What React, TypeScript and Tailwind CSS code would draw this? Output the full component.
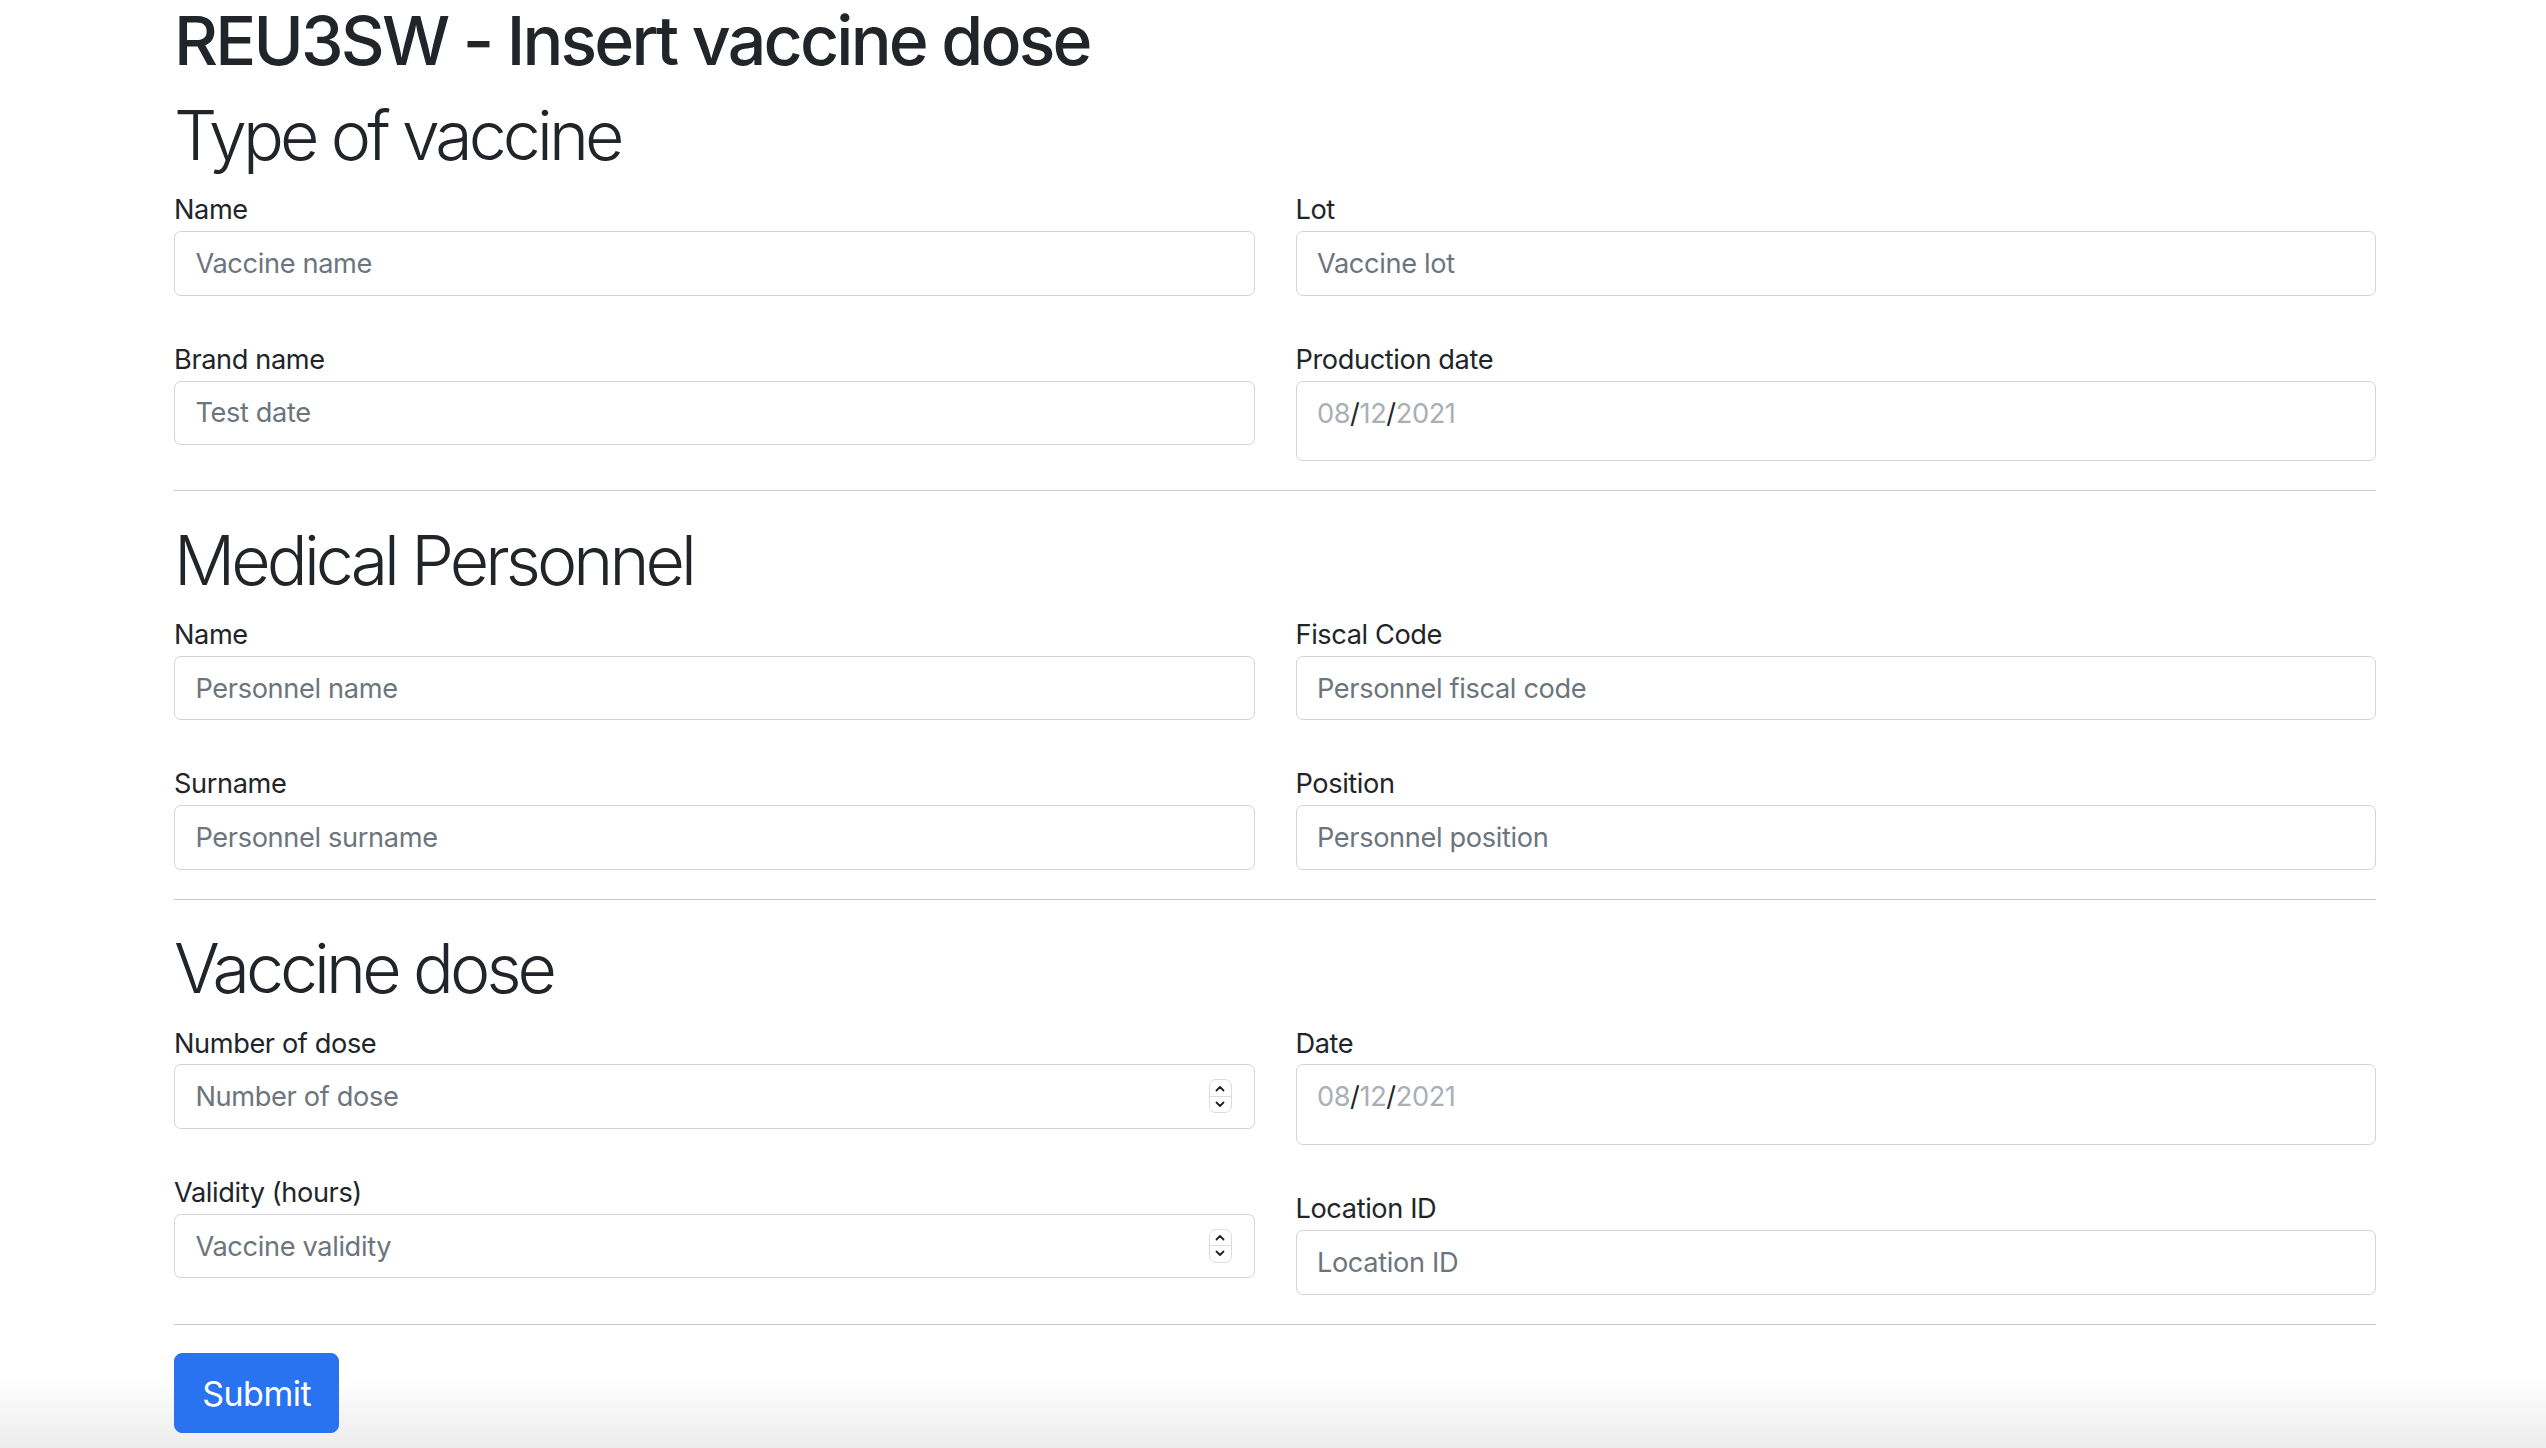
import React from 'react';

const font = { fontFamily: 'Inter, "Liberation Sans", sans-serif' };

function Field({ label, placeholder }: { label: string; placeholder: string }) {
  return (
    <div>
      <label className="block text-[27.2px] leading-[40.8px]">{label}</label>
      <input
        type="text"
        placeholder={placeholder}
        className="block w-full h-[64.6px] px-[20.4px] text-[27.2px] leading-[40.8px] tracking-[-0.35px] border-[1.7px] border-[#ced4da] rounded-[6.8px] bg-white outline-none placeholder:text-[#6c757d]"
      />
    </div>
  );
}

function NumberField({ label, placeholder }: { label: string; placeholder: string }) {
  return (
    <div>
      <label className="block text-[27.2px] leading-[40.8px]">{label}</label>
      <div className="relative">
        <input
          type="text"
          placeholder={placeholder}
          className="block w-full h-[64.6px] px-[20.4px] text-[27.2px] leading-[40.8px] tracking-[-0.35px] border-[1.7px] border-[#ced4da] rounded-[6.8px] bg-white outline-none placeholder:text-[#6c757d]"
        />
        <div className="absolute right-[23px] top-[15px] w-[23px] h-[34px] rounded-[7px] border border-[#dcdcdc] bg-white flex flex-col">
          <div className="flex-1 flex items-center justify-center border-b border-[#dcdcdc]">
            <svg width="10" height="7" viewBox="0 0 10 7" fill="none">
              <path d="M1.5 5.5L5 2l3.5 3.5" stroke="#222" strokeWidth="1.8" strokeLinecap="round" strokeLinejoin="round" />
            </svg>
          </div>
          <div className="flex-1 flex items-center justify-center">
            <svg width="10" height="7" viewBox="0 0 10 7" fill="none">
              <path d="M1.5 1.5L5 5l3.5-3.5" stroke="#222" strokeWidth="1.8" strokeLinecap="round" strokeLinejoin="round" />
            </svg>
          </div>
        </div>
      </div>
    </div>
  );
}

function DateField({ label }: { label: string }) {
  return (
    <div>
      <label className="block text-[27.2px] leading-[40.8px]">{label}</label>
      <div className="w-full h-[80.8px] px-[20.4px] pt-[12px] text-[27.2px] leading-[40.8px] border-[1.7px] border-[#ced4da] rounded-[6.8px] bg-white">
        <span className="text-[#a9afb5]">08</span>
        <span>/</span>
        <span className="text-[#a9afb5]">12</span>
        <span>/</span>
        <span className="text-[#a9afb5]">2021</span>
      </div>
    </div>
  );
}

function Divider() {
  return <hr className="mt-[29px] mb-[28.5px] border-0 border-t-[1.7px] border-[#c9cacb]" />;
}

function Heading({ children }: { children: React.ReactNode }) {
  return <h2 className="text-[68px] font-light leading-[81.6px] tracking-[-3.9px] mb-[13.6px]">{children}</h2>;
}

export default function App() {
  return (
    <div className="min-h-screen bg-linear-to-b from-white from-[95%] to-[#ececec] text-[#212529] tracking-[-0.4px]" style={font}>
      <div className="ml-[174px] w-[2202px]">
        <h1 className="text-[68px] font-medium leading-[81.6px] tracking-[-2.8px] mb-[13.6px]">REU3SW - Insert vaccine dose</h1>

        <Heading>Type of vaccine</Heading>
        <div className="grid grid-cols-2 gap-x-[41px] items-start">
          <div className="flex flex-col gap-[44px]">
            <Field label="Name" placeholder="Vaccine name" />
            <Field label="Brand name" placeholder="Test date" />
          </div>
          <div className="flex flex-col gap-[44px]">
            <Field label="Lot" placeholder="Vaccine lot" />
            <DateField label="Production date" />
          </div>
        </div>
        <Divider />

        <Heading>Medical Personnel</Heading>
        <div className="grid grid-cols-2 gap-x-[41px] items-start">
          <div className="flex flex-col gap-[44px]">
            <Field label="Name" placeholder="Personnel name" />
            <Field label="Surname" placeholder="Personnel surname" />
          </div>
          <div className="flex flex-col gap-[44px]">
            <Field label="Fiscal Code" placeholder="Personnel fiscal code" />
            <Field label="Position" placeholder="Personnel position" />
          </div>
        </div>
        <Divider />

        <Heading>Vaccine dose</Heading>
        <div className="grid grid-cols-2 gap-x-[41px] items-start">
          <div className="flex flex-col gap-[44px]">
            <NumberField label="Number of dose" placeholder="Number of dose" />
            <NumberField label="Validity (hours)" placeholder="Vaccine validity" />
          </div>
          <div className="flex flex-col gap-[44px]">
            <DateField label="Date" />
            <Field label="Location ID" placeholder="Location ID" />
          </div>
        </div>
        <Divider />

        <button
          type="submit"
          className="px-[27.2px] py-[13.6px] text-[34px] leading-[51px] tracking-[-0.5px] text-white bg-[#2a73f0] border-[1.7px] border-[#2a73f0] rounded-[8px]"
        >
          Submit
        </button>
      </div>
    </div>
  );
}
